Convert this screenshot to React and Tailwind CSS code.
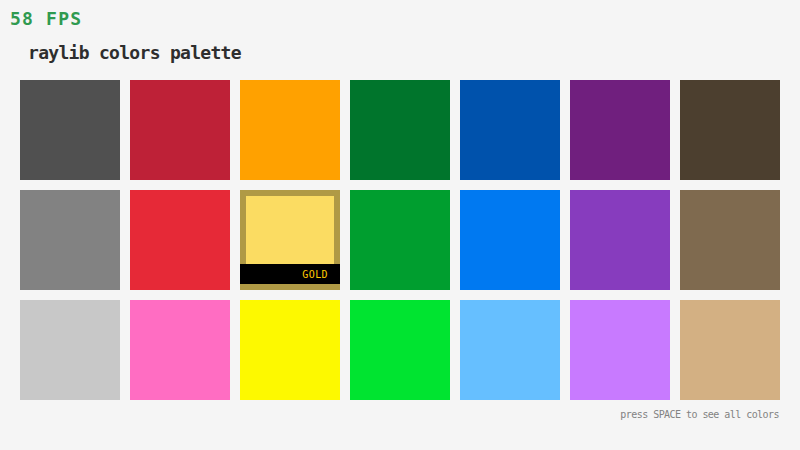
import React from "react";

const colors = [
  "#505050", "#be2137", "#ffa100", "#00752c", "#0052ac", "#701f7e", "#4c3f2f",
  "#828282", "#e62937", "GOLD", "#009e2f", "#0079f1", "#873cbe", "#7f6a4f",
  "#c8c8c8", "#ff6dc2", "#fdf900", "#00e430", "#66bfff", "#c87aff", "#d3b083",
];

const colorClass = {
  "#505050": "bg-[#505050]",
  "#be2137": "bg-[#be2137]",
  "#ffa100": "bg-[#ffa100]",
  "#00752c": "bg-[#00752c]",
  "#0052ac": "bg-[#0052ac]",
  "#701f7e": "bg-[#701f7e]",
  "#4c3f2f": "bg-[#4c3f2f]",
  "#828282": "bg-[#828282]",
  "#e62937": "bg-[#e62937]",
  "#009e2f": "bg-[#009e2f]",
  "#0079f1": "bg-[#0079f1]",
  "#873cbe": "bg-[#873cbe]",
  "#7f6a4f": "bg-[#7f6a4f]",
  "#c8c8c8": "bg-[#c8c8c8]",
  "#ff6dc2": "bg-[#ff6dc2]",
  "#fdf900": "bg-[#fdf900]",
  "#00e430": "bg-[#00e430]",
  "#66bfff": "bg-[#66bfff]",
  "#c87aff": "bg-[#c87aff]",
  "#d3b083": "bg-[#d3b083]",
};

const mono = { fontFamily: '"DejaVu Sans Mono", "Liberation Mono", monospace' };

export default function App() {
  return (
    <div className="w-[800px] h-[450px] bg-[#f5f5f5] flex flex-col overflow-hidden" style={mono}>
      <div className="ml-[10px] mt-[10px] text-[18px] leading-[18px] tracking-[1.2px] text-[#2f9a50] font-bold">
        58 FPS
      </div>
      <div className="ml-[28px] mt-[16px] text-[18px] leading-[18px] tracking-[-0.7px] text-[#2e2e2e] font-bold">
        raylib colors palette
      </div>
      <div className="ml-[20px] mt-[18px] grid grid-cols-[repeat(7,100px)] gap-[10px]">
        {colors.map((c, i) =>
          c === "GOLD" ? (
            <div
              key={i}
              className="relative w-[100px] h-[100px] bg-[#fbdc62] border-[6px] border-[#b09a45]"
            >
              <div className="absolute left-[-6px] right-[-6px] top-[68px] h-[20px] bg-black" />
              <div className="absolute right-[6px] top-[74px] text-[10px] leading-[10px] tracking-[0.4px] text-[#ffcb00]">
                GOLD
              </div>
            </div>
          ) : (
            <div key={i} className={`w-[100px] h-[100px] ${colorClass[c]}`} />
          )
        )}
      </div>
      <div className="mt-[10px] mr-[21px] self-end text-[10px] leading-[10px] tracking-[-0.55px] text-[#828282]">
        press SPACE to see all colors
      </div>
    </div>
  );
}
